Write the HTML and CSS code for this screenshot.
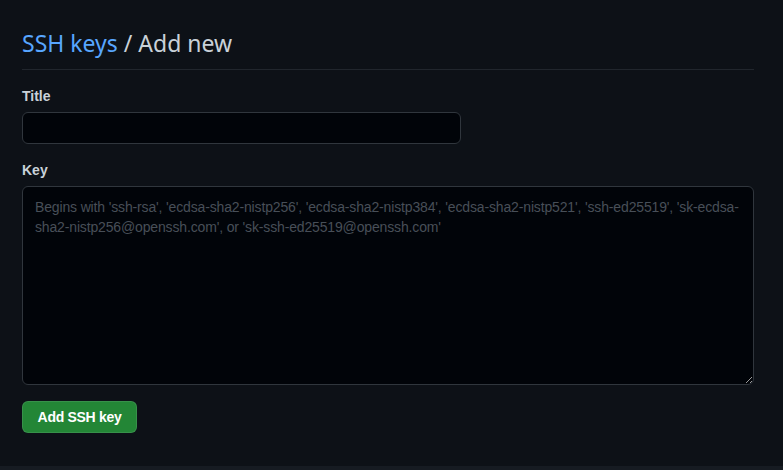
FILE: index.html
```html
<!DOCTYPE html>
<html lang="en">
<head>
<meta charset="utf-8">
<title>SSH keys / Add new</title>
<link rel="stylesheet" href="styles.css">
</head>
<body>
<main class="page">
  <div class="subhead">
    <h2 class="subhead-heading"><a class="crumb" href="#">SSH keys</a> / Add new</h2>
  </div>
  <form class="form">
    <div class="form-group">
      <label class="label" for="title">Title</label>
      <input class="input input-title" id="title" type="text">
    </div>
    <div class="form-group">
      <label class="label" for="key">Key</label>
      <textarea class="input input-key" id="key" placeholder="Begins with 'ssh-rsa', 'ecdsa-sha2-nistp256', 'ecdsa-sha2-nistp384', 'ecdsa-sha2-nistp521', 'ssh-ed25519', 'sk-ecdsa-&#10;sha2-nistp256@openssh.com', or 'sk-ssh-ed25519@openssh.com'"></textarea>
    </div>
    <button class="btn-primary" type="button">Add SSH key</button>
  </form>
</main>
<div class="footer-strip"></div>
</body>
</html>
```

FILE: styles.css
```css
html, body {
  margin: 0;
  padding: 0;
  background: #0d1117;
}
body {
  font-family: "Liberation Sans", "Noto Sans", sans-serif;
  color: #c9d1d9;
  font-size: 14px;
  height: 470px;
  overflow: hidden;
}
.page {
  width: 732px;
  padding: 28px 0 33px 22px;
}
.subhead {
  border-bottom: 1px solid #21262d;
  padding-bottom: 11px;
  margin-bottom: 16px;
}
.subhead-heading {
  margin: 0;
  font-family: "Noto Sans", "Liberation Sans", sans-serif;
  font-size: 23px;
  line-height: 30px;
  font-weight: 400;
  color: #c9d1d9;
}
.crumb {
  color: #58a6ff;
  text-decoration: none;
}
.form {
  display: flex;
  flex-direction: column;
  align-items: flex-start;
}
.form-group {
  display: flex;
  flex-direction: column;
  margin-bottom: 16px;
}
.label {
  font-weight: 700;
  font-size: 14px;
  line-height: 20px;
  margin-bottom: 6px;
  color: #c9d1d9;
}
.input {
  box-sizing: border-box;
  background: #010409;
  border: 1px solid #30363d;
  border-radius: 6px;
  color: #c9d1d9;
  font-family: inherit;
  font-size: 14px;
  line-height: 20px;
  padding: 5px 12px;
  outline: none;
}
.input-title {
  width: 439px;
  height: 32px;
}
.input-key {
  width: 732px;
  height: 199px;
  padding: 10px 6px 10px 12px;
  display: block;
  letter-spacing: -0.15px;
}
.input-key::placeholder {
  color: #484f58;
}
.btn-primary {
  box-sizing: border-box;
  height: 32px;
  width: 115px;
  padding: 0 8px;
  border: 1px solid rgba(240, 246, 252, 0.1);
  border-radius: 6px;
  background: #238636;
  color: #ffffff;
  font-family: inherit;
  font-size: 14px;
  font-weight: 700;
  line-height: 20px;
  letter-spacing: -0.3px;
  white-space: nowrap;
}
.footer-strip {
  height: 5px;
  background: #161b22;
}
```
